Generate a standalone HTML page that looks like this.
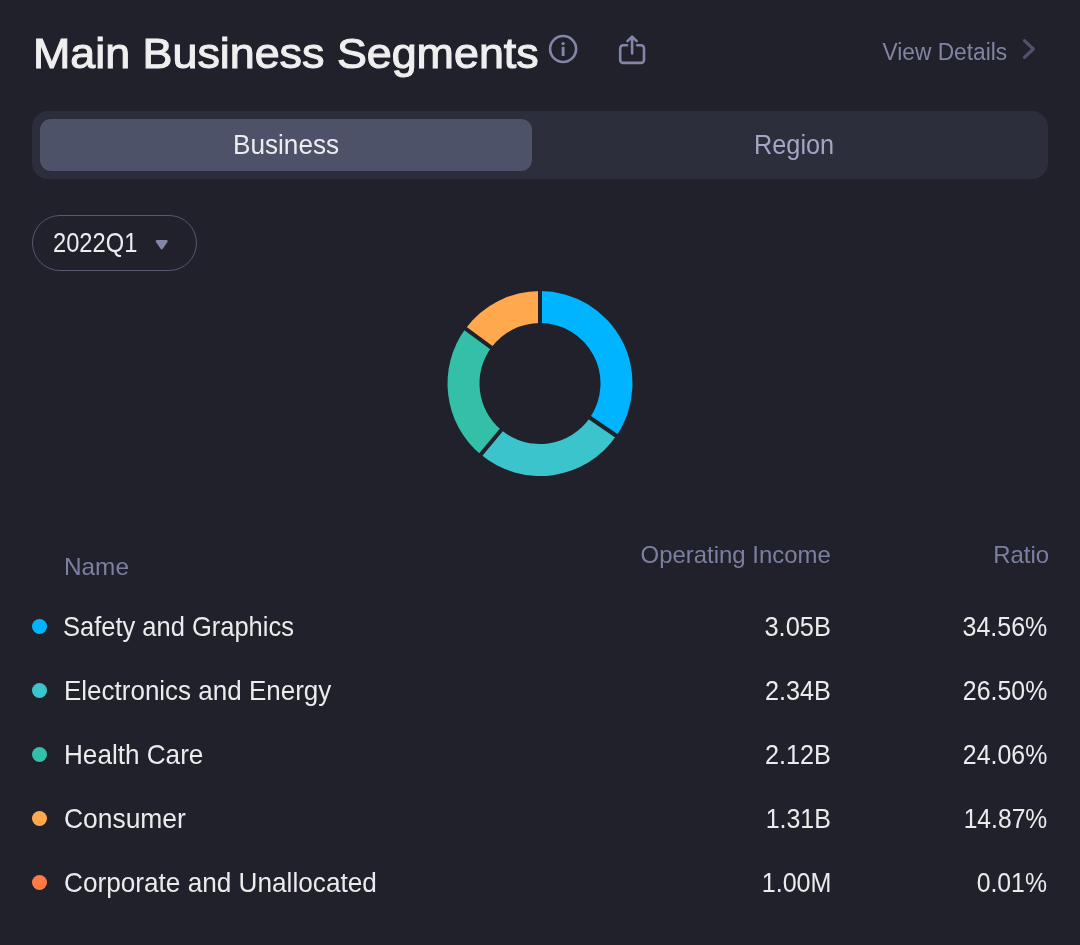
<!DOCTYPE html>
<html lang="en">
<head>
<meta charset="utf-8">
<title>Main Business Segments</title>
<style>
html,body{margin:0;padding:0;}
body{width:1080px;height:945px;background:#20212b;overflow:hidden;position:relative;font-family:"Liberation Sans",sans-serif;color:#ebebeb;}
.abs{position:absolute;white-space:nowrap;line-height:1;will-change:transform;}
.sx{display:inline-block;transform-origin:0 50%;}
.rx{display:inline-block;transform-origin:100% 50%;}
.title{color:#efefef;-webkit-text-stroke:1.1px #efefef;}
#seg{left:32px;top:111px;width:1016px;height:68px;border-radius:16px;background:#2c2e3b;}
#segsel{left:40px;top:119px;width:492px;height:52px;border-radius:11px;background:#4e5269;}
.tab1{color:#ececee;}
.tab2{color:#a2a5c3;}
#pill{left:32px;top:215px;width:163px;height:54px;border:1px solid #565970;border-radius:28px;box-sizing:content-box;}
.pilltxt{color:#ececee;}
.view{color:#8185a3;}
.hdr{color:#7c80a0;}
.row{color:#ebebec;}
.dot{position:absolute;width:15px;height:15px;border-radius:50%;left:32px;}
</style>
</head>
<body>
<div class="abs" id="seg"></div>
<div class="abs" id="segsel"></div>
<div class="abs" id="pill"></div>
<svg class="abs" style="left:545px;top:30px" width="110" height="40" viewBox="545 30 110 40" fill="none" stroke="#8386a6" stroke-width="2.6" stroke-linecap="round" stroke-linejoin="round">
  <circle cx="563.1" cy="49" r="13"/>
  <line x1="563.1" y1="46.8" x2="563.1" y2="56" stroke-width="2.9" stroke-linecap="butt"/>
  <circle cx="563.1" cy="43.6" r="1.7" fill="#8386a6" stroke="none"/>
  <path d="M627 45.2 h-3.8 a3 3 0 0 0 -3 3 v11.7 a3 3 0 0 0 3 3 h17.8 a3 3 0 0 0 3 -3 v-11.7 a3 3 0 0 0 -3 -3 h-3.8"/>
  <path d="M632.1 53.5 v-16.5 M627.5 41.2 l4.6 -4.6 l4.6 4.6"/>
</svg>
<svg class="abs" style="left:1015px;top:34px" width="30" height="30" viewBox="1015 34 30 30" fill="none" stroke="#4f5369" stroke-width="3.2" stroke-linecap="round" stroke-linejoin="round"><path d="M1024.5 40.7 L1033.3 49 L1024.5 57.3"/></svg>
<svg class="abs" style="left:150px;top:234px" width="24" height="20" viewBox="150 234 24 20"><path d="M157 241.3 h9.4 l-4.7 6.8 z" fill="#8486a6" stroke="#8486a6" stroke-width="2.6" stroke-linejoin="round"/></svg>
<svg class="abs" style="left:0;top:280px" width="1080" height="210" viewBox="0 280 1080 210">
<path d="M540.00 291.00 A92.5 92.5 0 0 1 616.31 435.78 L589.91 417.69 A60.5 60.5 0 0 0 540.00 323.00 Z" fill="#00b4ff"/>
<path d="M616.31 435.78 A92.5 92.5 0 0 1 480.77 454.55 L501.26 429.97 A60.5 60.5 0 0 0 589.91 417.69 Z" fill="#3bc4cc"/>
<path d="M480.77 454.55 A92.5 92.5 0 0 1 465.58 328.57 L491.32 347.57 A60.5 60.5 0 0 0 501.26 429.97 Z" fill="#33bfa8"/>
<path d="M465.58 328.57 A92.5 92.5 0 0 1 539.94 291.00 L539.96 323.00 A60.5 60.5 0 0 0 491.32 347.57 Z" fill="#ffa84d"/>
<g stroke="#20212b" stroke-width="4.0"><line x1="540.00" y1="326.00" x2="540.00" y2="288.00"/>
<line x1="587.43" y1="416.00" x2="618.78" y2="437.48"/>
<line x1="503.18" y1="427.67" x2="478.85" y2="456.85"/>
<line x1="493.74" y1="349.35" x2="463.16" y2="326.79"/></g>
</svg>
<div class="dot" style="top:618.9px;background:#00b4ff"></div>
<div class="dot" style="top:682.9px;background:#3bc4cc"></div>
<div class="dot" style="top:746.9px;background:#33bfa8"></div>
<div class="dot" style="top:810.9px;background:#ffa84d"></div>
<div class="dot" style="top:874.9px;background:#ff7a45"></div>
<div class="abs title" style="left:32.83px;top:31.7px;font-size:43.2px"><span class="sx" id="t_title" style="transform:scaleX(1.0377)">Main Business Segments</span></div>
<div class="abs view" style="right:73.29px;top:40.8px;font-size:23px"><span class="rx" id="t_view" style="transform:scaleX(0.9874)">View Details</span></div>
<div class="abs tab1" style="left:232.51px;top:130.75px;font-size:27.5px"><span class="sx" id="t_tab1" style="transform:scaleX(0.9506)">Business</span></div>
<div class="abs tab2" style="left:753.64px;top:130.75px;font-size:27.5px"><span class="sx" id="t_tab2" style="transform:scaleX(0.9194)">Region</span></div>
<div class="abs pilltxt" style="left:53.09px;top:228.75px;font-size:27.5px"><span class="sx" id="t_pill" style="transform:scaleX(0.8616)">2022Q1</span></div>
<div class="abs hdr" style="left:64.1px;top:555px;font-size:24px"><span class="sx" id="t_name" style="transform:scaleX(1.0145)">Name</span></div>
<div class="abs hdr" style="right:249.45px;top:543px;font-size:24px"><span class="rx" id="t_oi" style="transform:scaleX(0.9973)">Operating Income</span></div>
<div class="abs hdr" style="right:31.29px;top:543px;font-size:24px"><span class="rx" id="t_ratio" style="transform:scaleX(0.9974)">Ratio</span></div>
<div class="abs row" style="left:63.42px;top:612.75px;font-size:27.5px"><span class="sx" id="n0" style="transform:scaleX(0.9268)">Safety and Graphics</span></div>
<div class="abs row" style="right:248.94px;top:612.75px;font-size:27.5px"><span class="rx" id="a0" style="transform:scaleX(0.9241)">3.05B</span></div>
<div class="abs row" style="right:32.71px;top:612.75px;font-size:27.5px"><span class="rx" id="b0" style="transform:scaleX(0.9091)">34.56%</span></div>
<div class="abs row" style="left:64.32px;top:676.75px;font-size:27.5px"><span class="sx" id="n1" style="transform:scaleX(0.9451)">Electronics and Energy</span></div>
<div class="abs row" style="right:249.19px;top:676.75px;font-size:27.5px"><span class="rx" id="a1" style="transform:scaleX(0.9178)">2.34B</span></div>
<div class="abs row" style="right:33.18px;top:676.75px;font-size:27.5px"><span class="rx" id="b1" style="transform:scaleX(0.9049)">26.50%</span></div>
<div class="abs row" style="left:63.71px;top:740.75px;font-size:27.5px"><span class="sx" id="n2" style="transform:scaleX(0.9498)">Health Care</span></div>
<div class="abs row" style="right:249.19px;top:740.75px;font-size:27.5px"><span class="rx" id="a2" style="transform:scaleX(0.9178)">2.12B</span></div>
<div class="abs row" style="right:33.18px;top:740.75px;font-size:27.5px"><span class="rx" id="b2" style="transform:scaleX(0.9049)">24.06%</span></div>
<div class="abs row" style="left:64.37px;top:804.75px;font-size:27.5px"><span class="sx" id="n3" style="transform:scaleX(0.9606)">Consumer</span></div>
<div class="abs row" style="right:248.78px;top:804.75px;font-size:27.5px"><span class="rx" id="a3" style="transform:scaleX(0.9078)">1.31B</span></div>
<div class="abs row" style="right:32.64px;top:804.75px;font-size:27.5px"><span class="rx" id="b3" style="transform:scaleX(0.8964)">14.87%</span></div>
<div class="abs row" style="left:64.43px;top:868.75px;font-size:27.5px"><span class="sx" id="n4" style="transform:scaleX(0.9518)">Corporate and Unallocated</span></div>
<div class="abs row" style="right:248.25px;top:868.75px;font-size:27.5px"><span class="rx" id="a4" style="transform:scaleX(0.9118)">1.00M</span></div>
<div class="abs row" style="right:32.68px;top:868.75px;font-size:27.5px"><span class="rx" id="b4" style="transform:scaleX(0.9022)">0.01%</span></div>
</body>
</html>
